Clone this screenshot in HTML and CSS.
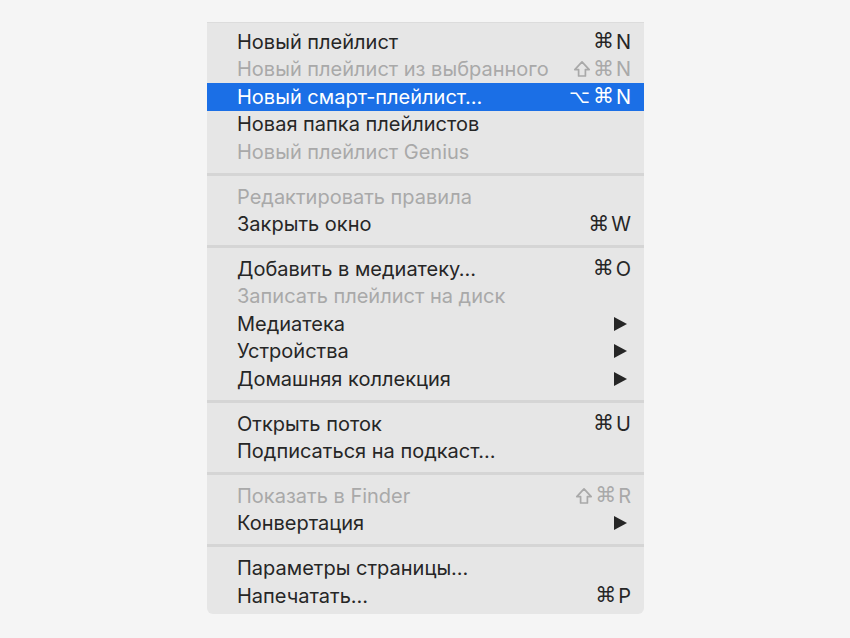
FILE: index.html
```html
<!DOCTYPE html>
<html lang="ru">
<head>
<meta charset="utf-8">
<title>Меню</title>
<link rel="stylesheet" href="styles.css">
</head>
<body>
<div class="menu">
  <div class="group">
    <div class="item"><span class="label">Новый плейлист</span><span class="sc"><span class="mod">⌘</span><span class="key">N</span></span></div>
    <div class="item disabled"><span class="label">Новый плейлист из выбранного</span><span class="sc"><svg class="shift" viewBox="0 0 18 18"><path d="M9 1.8 L1.8 9.6 H5.6 V16 H12.4 V9.6 H16.2 Z"/></svg><span class="mod">⌘</span><span class="key">N</span></span></div>
    <div class="item active"><span class="label">Новый смарт-плейлист…</span><span class="sc"><span class="mod opt">⌥</span><span class="mod">⌘</span><span class="key">N</span></span></div>
    <div class="item"><span class="label">Новая папка плейлистов</span></div>
    <div class="item disabled"><span class="label">Новый плейлист Genius</span></div>
  </div>
  <div class="sep"></div>
  <div class="group">
    <div class="item disabled"><span class="label">Редактировать правила</span></div>
    <div class="item"><span class="label">Закрыть окно</span><span class="sc"><span class="mod">⌘</span><span class="key">W</span></span></div>
  </div>
  <div class="sep"></div>
  <div class="group">
    <div class="item"><span class="label">Добавить в медиатеку…</span><span class="sc"><span class="mod">⌘</span><span class="key">O</span></span></div>
    <div class="item disabled"><span class="label">Записать плейлист на диск</span></div>
    <div class="item"><span class="label">Медиатека</span><span class="arrow"></span></div>
    <div class="item"><span class="label">Устройства</span><span class="arrow"></span></div>
    <div class="item"><span class="label">Домашняя коллекция</span><span class="arrow"></span></div>
  </div>
  <div class="sep"></div>
  <div class="group">
    <div class="item"><span class="label">Открыть поток</span><span class="sc"><span class="mod">⌘</span><span class="key">U</span></span></div>
    <div class="item"><span class="label">Подписаться на подкаст…</span></div>
  </div>
  <div class="sep"></div>
  <div class="group">
    <div class="item disabled"><span class="label">Показать в Finder</span><span class="sc"><svg class="shift" viewBox="0 0 18 18"><path d="M9 1.8 L1.8 9.6 H5.6 V16 H12.4 V9.6 H16.2 Z"/></svg><span class="mod">⌘</span><span class="key">R</span></span></div>
    <div class="item"><span class="label">Конвертация</span><span class="arrow"></span></div>
  </div>
  <div class="sep"></div>
  <div class="group">
    <div class="item"><span class="label">Параметры страницы…</span></div>
    <div class="item"><span class="label">Напечатать…</span><span class="sc"><span class="mod">⌘</span><span class="key">P</span></span></div>
  </div>
</div>
</body>
</html>
```

FILE: styles.css
```css
html, body {
  margin: 0;
  padding: 0;
  background: #f5f5f5;
}
body {
  font-family: "Inter", "Liberation Sans", sans-serif;
  font-size: 20px;
  color: #262626;
}
.menu {
  margin: 22px 0 0 207px;
  width: 437px;
  background: #e6e6e6;
  border-top: 1px solid #dcdcdc;
  border-radius: 0 0 6px 6px;
  padding: 5px 0 5px 0;
  box-sizing: border-box;
}
.item {
  height: 27.5px;
  display: flex;
  align-items: center;
  justify-content: space-between;
  padding: 0 13px 0 30px;
}
.item.disabled {
  color: #a9a9a9;
}
.item.active {
  background: #1b6fe6;
  color: #ffffff;
}
.label {
  white-space: nowrap;
}
.sc {
  display: flex;
  align-items: center;
}
.mod {
  font-family: "DejaVu Sans", sans-serif;
  font-size: 21px;
  line-height: 1;
}
.mod.opt {
  font-size: 18px;
  margin-right: 3px;
}
.shift {
  width: 18px;
  height: 18px;
  margin-right: 2px;
  fill: none;
  stroke: currentColor;
  stroke-width: 1.7;
  stroke-linejoin: round;
}
.key {
  margin-left: 2px;
}
.arrow {
  width: 0;
  height: 0;
  border-top: 7px solid transparent;
  border-bottom: 7px solid transparent;
  border-left: 13px solid #262626;
  margin-right: 4px;
}
.sep {
  height: 17.3px;
  display: flex;
  align-items: center;
}
.sep::before {
  content: "";
  display: block;
  width: 100%;
  height: 3px;
  background: #d5d5d5;
}
```
